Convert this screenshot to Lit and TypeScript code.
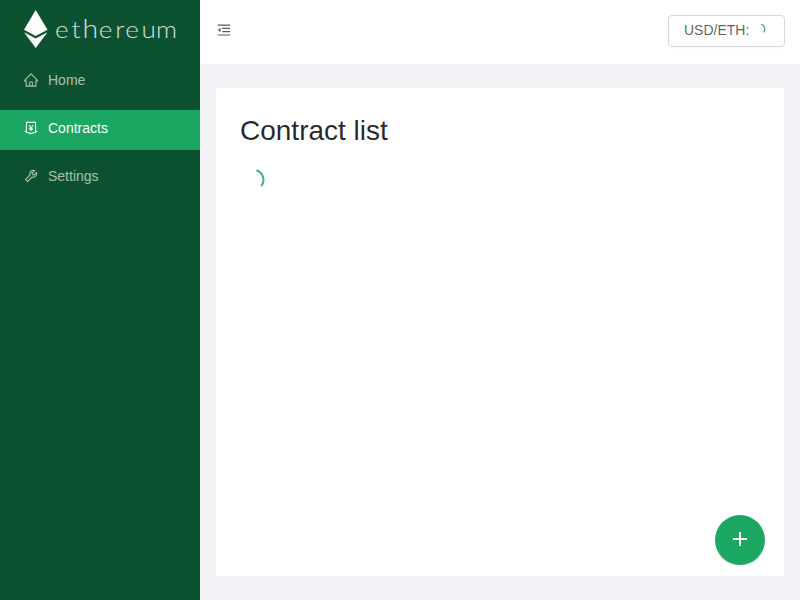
import { LitElement, html, svg, css } from "lit";
import { customElement } from "lit/decorators.js";

const icon = (...paths: string[]) => html`<svg class="icon" viewBox="64 64 896 896">${paths.map((d) => svg`<path d=${d}></path>`)}</svg>`;

const home = icon("M946.5 505L560.1 118.8l-25.9-25.9a31.5 31.5 0 0 0-44.4 0L77.5 505a63.9 63.9 0 0 0-18.8 46c.4 35.2 29.7 63.3 64.9 63.3h42.5V940h691.8V614.3h43.4c17.1 0 33.2-6.7 45.3-18.8a63.6 63.6 0 0 0 18.7-45.3c0-17-6.7-33.1-18.8-45.2zM568 868H456V664h112v204zm217.9-325.7V868H632V640c0-22.1-17.9-40-40-40H432c-22.1 0-40 17.9-40 40v228H238.1V542.3h-96l370-369.7 23.1 23.1L882 542.3h-96.1z");
const contracts = icon(
  "M911.5 700.7a8 8 0 0 0-10.3-4.8L840 718.2V180c0-37.6-30.4-68-68-68H252c-37.6 0-68 30.4-68 68v538.2l-61.3-22.3c-.9-.3-1.8-.5-2.7-.5-4.4 0-8 3.6-8 8V763c0 3.3 2.1 6.3 5.3 7.5L501 910.1c7.1 2.6 14.8 2.6 21.9 0l383.8-139.5c3.2-1.2 5.3-4.2 5.3-7.5v-59.6c0-1-.2-1.9-.5-2.8zM512 837.5l-256-93.1V184h512v560.4l-256 93.1z",
  "M660.6 312h-54.5c-3 0-5.8 1.7-7.1 4.4l-84.7 168.8H511l-84.7-168.8a8 8 0 0 0-7.1-4.4h-55.7c-1.3 0-2.6.3-3.8 1-3.9 2.1-5.3 7-3.2 10.8l103.9 191.6h-57c-4.4 0-8 3.6-8 8v27.1c0 4.4 3.6 8 8 8h76v39h-76c-4.4 0-8 3.6-8 8v27.1c0 4.4 3.6 8 8 8h76V704c0 4.4 3.6 8 8 8h49.9c4.4 0 8-3.6 8-8v-63.5h76.3c4.4 0 8-3.6 8-8v-27.1c0-4.4-3.6-8-8-8h-76.3v-39h76.3c4.4 0 8-3.6 8-8v-27.1c0-4.4-3.6-8-8-8H564l103.7-191.6c.6-1.2 1-2.5 1-3.8-.1-4.3-3.7-7.9-8.1-7.9z"
);
const settings = icon("M876.6 239.5c-.5-.9-1.2-1.8-2-2.5-5-5-13.1-5-18.1 0L684.2 409.3l-67.9-67.9L788.7 169c.8-.8 1.4-1.6 2-2.5 3.6-6.1 1.6-13.9-4.5-17.5-98.2-58-226.8-44.7-311.3 39.7-67 67-89.2 162-66.5 247.4l-293 293c-3 3-2.8 7.9.3 11l169.7 169.7c3.1 3.1 8.1 3.3 11 .3l292.9-292.9c85.5 22.8 180.5.7 247.6-66.4 84.4-84.5 97.7-213.1 39.7-311.3zM786 499.8c-58.1 58.1-145.3 69.3-214.6 33.6l-8.8 8.8-.1-.1-274 274.1-79.2-79.2 230.1-230.1s0 .1.1.1l52.8-52.8c-35.7-69.3-24.5-156.5 33.6-214.6a184.2 184.2 0 0 1 144-53.5L537 318.9a32.05 32.05 0 0 0 0 45.3l124.5 124.5a32.05 32.05 0 0 0 45.3 0l132.8-132.8c3.7 51.8-14.4 104.8-53.6 143.9z");
const fold = icon("M408 442h480c4.4 0 8-3.6 8-8v-56c0-4.4-3.6-8-8-8H408c-4.4 0-8 3.6-8 8v56c0 4.4 3.6 8 8 8zm-8 204c0 4.4 3.6 8 8 8h480c4.4 0 8-3.6 8-8v-56c0-4.4-3.6-8-8-8H408c-4.4 0-8 3.6-8 8v56zm504-486H120c-4.4 0-8 3.6-8 8v56c0 4.4 3.6 8 8 8h784c4.4 0 8-3.6 8-8v-56c0-4.4-3.6-8-8-8zm0 632H120c-4.4 0-8 3.6-8 8v56c0 4.4 3.6 8 8 8h784c4.4 0 8-3.6 8-8v-56c0-4.4-3.6-8-8-8zM115.4 518.9L271.7 642c5.8 4.6 14.4.5 14.4-6.9V388.9c0-7.4-8.5-11.5-14.4-6.9L115.4 505.1a8.74 8.74 0 0 0 0 13.8z");

// Left edge of every letter of the wordmark, in logo pixels.
const letterStarts = [55, 71.4, 82.4, 98.7, 115.2, 125.2, 141.6, 156];
const stretch = 1.16;

@customElement("app-root")
export class AppRoot extends LitElement {
  static styles = css`
    :host { display: flex; position: relative; height: 100vh; background: #f0f2f5; font: 14px/21px "Liberation Sans", Arial, sans-serif; color: rgba(0, 0, 0, 0.65); }
    * { box-sizing: border-box; }
    .icon { display: block; width: 14px; height: 14px; fill: currentColor; flex: none; }
    .sider { width: 200px; flex: none; background: #0c5130; }
    .logo { display: block; width: 200px; height: 60px; }
    .wordmark { font-family: Lato, sans-serif; font-weight: 300; font-size: 22.5px; fill: #fff; opacity: 0.82; }
    .tall { font-size: 24.5px; }
    .menu { display: flex; flex-direction: column; gap: 8px; margin-top: 2px; }
    .item { display: flex; align-items: center; gap: 10px; height: 40px; padding: 0 24px 4px; color: rgba(255, 255, 255, 0.65); }
    .item.active { background: #1ba761; color: #fff; }
    .main { flex: 1; display: flex; flex-direction: column; min-width: 0; }
    .header { height: 64px; background: #fff; display: flex; justify-content: space-between; align-items: flex-start; padding: 15px 15px 0 17px; }
    .fold { padding-top: 8px; }
    .rate { display: flex; width: 117px; height: 32px; border: 1px solid #d9d9d9; border-radius: 4px; padding: 4px 15px; box-shadow: 0 2px 0 rgba(0, 0, 0, 0.015); }
    .small { display: block; width: 14px; height: 14px; margin: 2px 0 0 4px; }
    .content { flex: 1; background: #fff; margin: 24px 16px; padding: 24px; }
    h1 { margin: 0; font-size: 28px; line-height: 38px; font-weight: 400; color: rgba(0, 0, 0, 0.85); }
    .big { display: block; width: 28px; height: 28px; margin-top: 16px; }
    .arc { fill: none; stroke: #36b977; stroke-linecap: round; }
    .add { position: absolute; right: 35px; bottom: 35px; width: 50px; height: 50px; border: 0; border-radius: 50%; background: #1ba761; padding: 0; box-shadow: 0 2px 0 rgba(0, 0, 0, 0.045); }
    .plus { display: block; width: 50px; height: 50px; fill: #fff; }
  `;

  render() {
    return html`
      <aside class="sider">
        <svg class="logo" viewBox="0 0 200 60">
          <path fill="#fff" d="M35.7 10 47.5 29.8 35.7 36 24 29.8Z M24 32.2 35.7 38.5 47.5 32.2 35.7 48Z"></path>
          <text class="wordmark" transform="scale(${stretch} 1)" y="37.8" x=${letterStarts.map((x) => x / stretch).join(" ")}>et<tspan class="tall">h</tspan>ereum</text>
        </svg>
        <nav class="menu">
          <div class="item">${home}<span>Home</span></div>
          <div class="item active">${contracts}<span>Contracts</span></div>
          <div class="item">${settings}<span>Settings</span></div>
        </nav>
      </aside>
      <main class="main">
        <header class="header">
          <div class="fold">${fold}</div>
          <div class="rate"><span>USD/ETH:</span>
            <svg class="small" viewBox="0 0 14 14"><path class="arc" stroke-width="1.4" d="M8.7 2.4A5 5 0 0 1 10.9 9.8"></path></svg>
          </div>
        </header>
        <section class="content">
          <h1>Contract list</h1>
          <svg class="big" viewBox="240 166 28 28"><path class="arc" stroke-width="2" d="M257.2 170.5A10 10 0 0 1 261.7 185.4"></path></svg>
        </section>
      </main>
      <button class="add" aria-label="Add">
        <svg class="plus" viewBox="0 0 50 50"><path d="M24 17h2v14h-2zM18 23h14v2H18z"></path></svg>
      </button>
    `;
  }
}
